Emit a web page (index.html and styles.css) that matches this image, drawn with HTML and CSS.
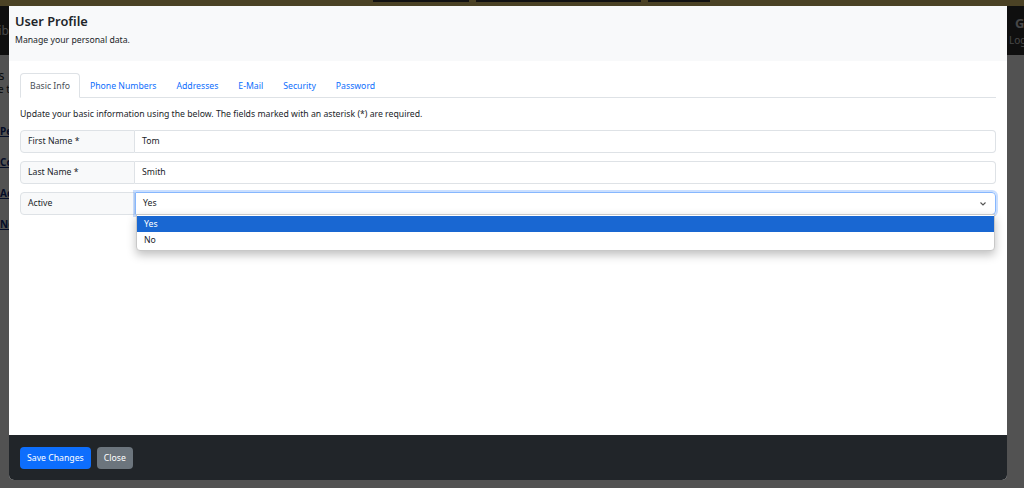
FILE: index.html
```html
<!DOCTYPE html>
<html lang="en">
<head>
<meta charset="utf-8">
<title>User Profile</title>
<link rel="stylesheet" href="styles.css">
</head>
<body>
<div class="page">
  <div class="topstrip">
    <span class="tbar tbar1"></span>
    <span class="tbar tbar2"></span>
    <span class="tbar tbar3"></span>
  </div>
  <nav class="navbar">
    <span class="brand"><span class="brand-in">MyLib</span></span>
    <span class="navright"><b class="nav-g">G</b><span class="nav-log">Logout</span></span>
  </nav>
  <main class="content">
    <div class="side">
      <div class="side-h">Settings</div>
      <div class="side-p">Use the links</div>
      <a class="side-link" href="#">Personal</a>
      <a class="side-link" href="#">Contacts</a>
      <a class="side-link" href="#">Addresses</a>
      <a class="side-link" href="#">Notes</a>
    </div>
  </main>
</div>
<div class="backdrop"></div>
<div class="modal">
  <div class="modal-header">
    <h1 class="modal-title">User Profile</h1>
    <p class="modal-sub">Manage your personal data.</p>
  </div>
  <div class="modal-body">
    <ul class="tabs">
      <li class="tab active">Basic Info</li>
      <li class="tab">Phone Numbers</li>
      <li class="tab">Addresses</li>
      <li class="tab">E-Mail</li>
      <li class="tab">Security</li>
      <li class="tab">Password</li>
    </ul>
    <p class="intro">Update your basic information using the below. The fields marked with an asterisk (*) are required.</p>
    <div class="group">
      <span class="group-label">First Name *</span>
      <span class="group-input">Tom</span>
    </div>
    <div class="group">
      <span class="group-label">Last Name *</span>
      <span class="group-input">Smith</span>
    </div>
    <div class="group">
      <span class="group-label">Active</span>
      <div class="select-wrap">
        <span class="group-input select focus">Yes
          <svg class="chev" width="8" height="6" viewBox="0 0 8 6"><path d="M1.5 1.5 L4 4 L6.5 1.5" fill="none" stroke="#555" stroke-width="1.1"/></svg>
        </span>
        <ul class="options">
          <li class="option selected">Yes</li>
          <li class="option">No</li>
        </ul>
      </div>
    </div>
  </div>
  <div class="modal-footer">
    <button class="btn btn-primary">Save Changes</button>
    <button class="btn btn-secondary">Close</button>
  </div>
</div>
</body>
</html>
```
FILE: styles.css
```css
* { box-sizing: border-box; }
html, body { margin: 0; padding: 0; }
body {
  width: 1024px;
  height: 488px;
  overflow: hidden;
  font-family: "Noto Sans", "Open Sans", sans-serif;
  font-size: 8.7px;
  color: #212529;
  background: #fff;
  position: relative;
}
.page { display: flex; flex-direction: column; height: 488px; }
.topstrip {
  height: 6px;
  background: #e8ce74;
  display: flex;
  align-items: flex-start;
  gap: 7px;
  padding-left: 373px;
}
.tbar { height: 2px; background: #3a3a3a; }
.tbar1 { width: 96px; }
.tbar2 { width: 165px; }
.tbar3 { width: 62px; }
.navbar {
  height: 49px;
  background: #2f2f2f;
  color: #ddd;
  display: flex;
  justify-content: space-between;
  align-items: center;
}
.brand { width: 9px; overflow: hidden; font-size: 12px; display: flex; justify-content: flex-end; }
.brand-in { white-space: nowrap; }
.navright {
  width: 16px;
  overflow: hidden;
  display: flex;
  flex-direction: column;
  padding-left: 1px;
  white-space: nowrap;
  line-height: 1.4;
}
.nav-g { font-size: 13px; margin-left: 6px; }
.nav-log { font-size: 10px; }
.content { flex: 1; }
.side { width: 9px; overflow: hidden; padding-top: 12px; }
.side-h { font-size: 13px; line-height: 16px; margin-left: -45px; white-space: nowrap; }
.side-p { font-size: 10px; line-height: 13px; margin-left: -14px; margin-bottom: 29px; white-space: nowrap; }
.side-link { display: block; color: #0d2a7a; font-weight: 700; font-size: 10px; line-height: 13px; margin-bottom: 18px; white-space: nowrap; }

.backdrop {
  position: absolute;
  inset: 0;
  background: rgba(0,0,0,0.68);
}
.modal {
  position: absolute;
  left: 9px;
  top: 6px;
  width: 998px;
  height: 474px;
  background: #fff;
  border-radius: 0 0 5px 5px;
  display: flex;
  flex-direction: column;
  overflow: hidden;
}
.modal-header {
  height: 55px;
  background: #f8f9fa;
  padding: 6px 6px 0;
}
.modal-title {
  margin: 0;
  font-size: 12.8px;
  font-weight: 600;
  line-height: 18px;
  color: #212529;
}
.modal-sub { margin: 4px 0 0; font-size: 8.7px; line-height: 13px; }
.modal-body { flex: 1; padding: 12px 11px 0; }
.tabs {
  list-style: none;
  margin: 0;
  padding: 0;
  display: flex;
  border-bottom: 1px solid #dee2e6;
  height: 25px;
}
.tab {
  padding: 0 9px;
  height: 25px;
  line-height: 24px;
  color: #0d6efd;
  border: 1px solid transparent;
  border-radius: 4px 4px 0 0;
}
.tab.active {
  color: #495057;
  background: #fff;
  border-color: #dee2e6 #dee2e6 #fff;
}
.intro { margin: 9px 0 9px; line-height: 14px; }
.group {
  display: flex;
  height: 23px;
  margin-bottom: 8px;
}
.group-label {
  width: 115px;
  background: #f8f9fa;
  border: 1px solid #dee2e6;
  border-radius: 4px 0 0 4px;
  padding: 0 7px;
  line-height: 21px;
}
.group-input {
  flex: 1;
  border: 1px solid #dee2e6;
  border-left: 0;
  border-radius: 0 4px 4px 0;
  padding: 0 7px;
  line-height: 21px;
}
.select-wrap { flex: 1; position: relative; display: flex; }
.select {
  display: flex;
  justify-content: space-between;
  align-items: center;
  padding-right: 8px;
}
.select.focus {
  border: 1px solid #86b7fe;
  box-shadow: 0 0 0 2px rgba(13,110,253,0.22);
}
.options {
  position: absolute;
  left: 1px;
  right: 1px;
  top: 22px;
  list-style: none;
  margin: 0;
  padding: 1px 0 2px;
  background: #fff;
  border: 1px solid #c8c8c8;
  border-radius: 0 0 4px 4px;
  box-shadow: 0 4px 10px rgba(0,0,0,0.25);
}
.option { height: 16px; line-height: 16px; padding: 0 7px; }
.option.selected { background: #1967d2; color: #fff; }
.modal-footer {
  height: 45px;
  background: #212529;
  display: flex;
  align-items: center;
  gap: 6px;
  padding: 0 11px;
}
.btn {
  font-family: inherit;
  font-size: 8.7px;
  height: 22px;
  padding: 0 7px;
  border: 0;
  border-radius: 4px;
  color: #fff;
}
.btn-primary { background: #0d6efd; }
.btn-secondary { background: #6c757d; }
```
